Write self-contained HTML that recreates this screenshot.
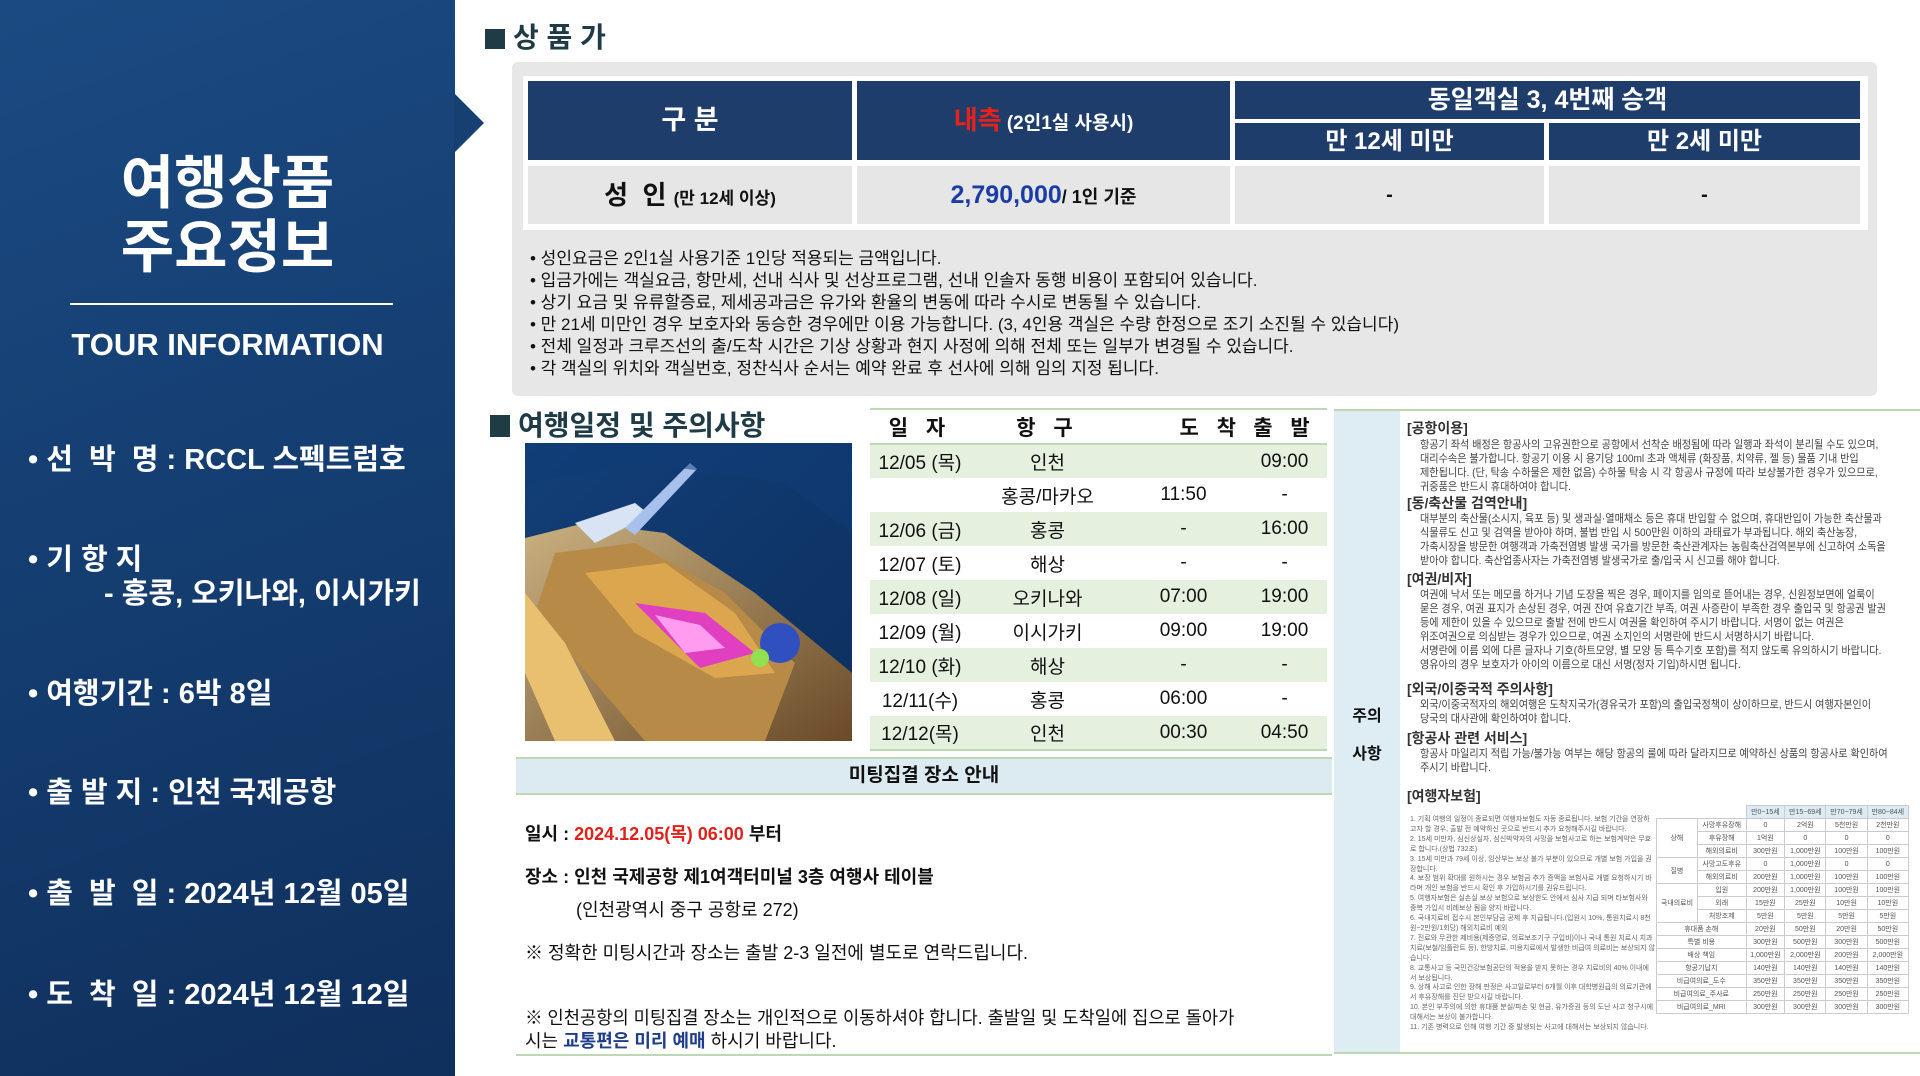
<!DOCTYPE html>
<html><head><meta charset="utf-8">
<style>
*{margin:0;padding:0;box-sizing:border-box}
body{width:1920px;height:1076px;overflow:hidden;background:#fff;position:relative;font-family:"Liberation Sans","Noto Sans CJK KR",sans-serif;color:#111}
.abs{position:absolute;white-space:nowrap}
.side{position:absolute;left:0;top:0;width:455px;height:1076px;background:linear-gradient(160deg,#1b4a82 0%,#143d70 50%,#0f2f5c 100%)}
.arrow{position:absolute;left:454px;top:93px;width:0;height:0;border-top:30px solid transparent;border-bottom:30px solid transparent;border-left:30px solid #163f72}
.title{color:#fff;font-weight:bold;font-size:58px;text-align:center;width:455px;left:0;line-height:64px}
.bul{color:#fff;font-weight:bold;font-size:29px;left:28px;letter-spacing:0px}
.sq{display:inline-block;width:20px;height:20px;background:#1f3c46;margin-right:8px;vertical-align:-2px}
.h2{font-size:28px;font-weight:bold;color:#1f3c46}
table{border-collapse:collapse}
.sc td{text-align:center;font-size:19px;height:34px}
.note{font-size:17px;left:530px;transform:scaleX(1.0);transform-origin:left}
.r{font-size:11px;color:#444;transform:scaleX(.92);transform-origin:left;position:absolute;white-space:nowrap;left:1420px}
.rh{font-size:14px;font-weight:bold;color:#333;position:absolute;left:1407px;white-space:nowrap}
.it td{border:1px solid #ccc;font-size:7px;color:#555;text-align:center;height:13px}
</style></head><body>
<div class="side"></div>
<div class="arrow"></div>
<div class="abs title" style="top:152px">여행상품<br>주요정보</div>
<div class="abs" style="left:70px;top:303px;width:323px;height:2px;background:#fff"></div>
<div class="abs" style="left:0;width:455px;text-align:center;top:327px;color:#fff;font-size:31px;font-weight:bold">TOUR INFORMATION</div>
<div class="abs bul" style="top:436px">• 선 &nbsp;박 &nbsp;명 : RCCL 스펙트럼호</div>
<div class="abs bul" style="top:536px">• 기 항 지</div>
<div class="abs bul" style="top:570px;left:104px">- 홍콩, 오키나와, 이시가키</div>
<div class="abs bul" style="top:670px">• 여행기간 : 6박 8일</div>
<div class="abs bul" style="top:769px">• 출 발 지 : 인천 국제공항</div>
<div class="abs bul" style="top:870px">• 출 &nbsp;발 &nbsp;일 : 2024년 12월 05일</div>
<div class="abs bul" style="top:971px">• 도 &nbsp;착 &nbsp;일 : 2024년 12월 12일</div>

<div class="abs h2" style="left:485px;top:16px"><span class="sq"></span>상 품 가</div>
<div class="abs" style="left:512px;top:62px;width:1365px;height:334px;background:#e7e7e7;border-radius:6px"></div>
<div class="abs" style="left:523px;top:76px;width:1345px;height:154px;background:#fff"></div>
<div class="abs" style="left:528px;top:81px;width:324px;height:79px;background:#1f3d6b;color:#fff;font-size:27px;font-weight:bold;text-align:center;line-height:79px">구 분</div>
<div class="abs" style="left:857px;top:81px;width:373px;height:79px;background:#1f3d6b;color:#fff;font-size:19px;font-weight:bold;text-align:center;line-height:79px"><span style="color:#e8221b;font-size:26px">내측</span> (2인1실 사용시)</div>
<div class="abs" style="left:1235px;top:81px;width:625px;height:38px;background:#1f3d6b;color:#fff;font-size:25px;font-weight:bold;text-align:center;line-height:38px">동일객실 3, 4번째 승객</div>
<div class="abs" style="left:1235px;top:123px;width:309px;height:37px;background:#1f3d6b;color:#fff;font-size:24px;font-weight:bold;text-align:center;line-height:37px">만 12세 미만</div>
<div class="abs" style="left:1549px;top:123px;width:311px;height:37px;background:#1f3d6b;color:#fff;font-size:24px;font-weight:bold;text-align:center;line-height:37px">만 2세 미만</div>
<div class="abs" style="left:528px;top:166px;width:324px;height:58px;background:#e6e6e6;font-size:26px;font-weight:bold;text-align:center;line-height:58px">성 &nbsp;인 <span style="font-size:17px">(만 12세 이상)</span></div>
<div class="abs" style="left:857px;top:166px;width:373px;height:58px;background:#e6e6e6;font-size:18px;font-weight:bold;text-align:center;line-height:58px"><span style="color:#1b3ca6;font-size:25px">2,790,000</span>/ 1인 기준</div>
<div class="abs" style="left:1235px;top:166px;width:309px;height:58px;background:#e6e6e6;font-size:20px;font-weight:bold;text-align:center;line-height:58px">-</div>
<div class="abs" style="left:1549px;top:166px;width:311px;height:58px;background:#e6e6e6;font-size:20px;font-weight:bold;text-align:center;line-height:58px">-</div>

<div class="abs note" style="top:244px">• 성인요금은 2인1실 사용기준 1인당 적용되는 금액입니다.</div>
<div class="abs note" style="top:266px">• 입금가에는 객실요금, 항만세, 선내 식사 및 선상프로그램, 선내 인솔자 동행 비용이 포함되어 있습니다.</div>
<div class="abs note" style="top:288px">• 상기 요금 및 유류할증료, 제세공과금은 유가와 환율의 변동에 따라 수시로 변동될 수 있습니다.</div>
<div class="abs note" style="top:310px">• 만 21세 미만인 경우 보호자와 동승한 경우에만 이용 가능합니다. (3, 4인용 객실은 수량 한정으로 조기 소진될 수 있습니다)</div>
<div class="abs note" style="top:332px">• 전체 일정과 크루즈선의 출/도착 시간은 기상 상황과 현지 사정에 의해 전체 또는 일부가 변경될 수 있습니다.</div>
<div class="abs note" style="top:354px">• 각 객실의 위치와 객실번호, 정찬식사 순서는 예약 완료 후 선사에 의해 임의 지정 됩니다.</div>

<div class="abs h2" style="left:490px;top:404px;font-size:28px"><span class="sq" style="width:20px;height:22px"></span>여행일정 및 주의사항</div>
<svg class="abs" style="left:525px;top:443px" width="327" height="298" viewBox="0 0 327 298">
<defs><linearGradient id="sea" x1="0" y1="0" x2="1" y2="1"><stop offset="0" stop-color="#123f78"/><stop offset="1" stop-color="#0d2f5e"/></linearGradient>
<linearGradient id="hull" x1="0" y1="0" x2="1" y2="1"><stop offset="0" stop-color="#c9b080"/><stop offset="1" stop-color="#6a4a28"/></linearGradient></defs>
<rect width="327" height="298" fill="url(#sea)"/>
<path d="M0 95 L60 80 L140 90 L230 150 L327 230 L327 298 L0 298 Z" fill="url(#hull)"/>
<path d="M30 110 L110 100 L200 150 L270 220 L240 298 L120 298 L10 170 Z" fill="#b88a48"/>
<path d="M60 130 L140 120 L210 170 L250 230 L190 235 L110 190 Z" fill="#e0a850" opacity=".9"/>
<path d="M110 160 L180 170 L230 210 L175 225 Z" fill="#e040c0"/>
<path d="M130 172 L175 182 L200 205 L160 210 Z" fill="#ff9cf0"/>
<path d="M0 150 L40 200 L90 298 L30 298 L0 230 Z" fill="#e8c070"/>
<path d="M50 80 L110 60 L125 72 L70 100 Z" fill="#d8e4f4"/>
<path d="M100 85 L165 20 L172 26 L110 92 Z" fill="#a8c0ec"/>
<circle cx="255" cy="200" r="20" fill="#3050c0"/>
<circle cx="235" cy="215" r="9" fill="#90e050"/>
<path d="M0 0 L327 0 L327 90 L260 40 L120 20 L0 40 Z" fill="#0f3b78" opacity=".5"/>
</svg>

<div class="abs" style="left:870px;top:408px;width:457px;height:2px;background:#bcd9b4"></div>
<table class="abs sc" style="left:870px;top:410px;width:457px">
<tr style="height:31px;border-bottom:2px solid #bcd9b4"><td style="width:100px;font-weight:bold;font-size:21px;height:31px;letter-spacing:6px">일 자</td><td style="width:155px;font-weight:bold;font-size:21px;letter-spacing:6px">항 구</td><td style="width:117px;font-weight:bold;font-size:21px;text-align:right;letter-spacing:6px">도 착</td><td style="font-weight:bold;font-size:21px;letter-spacing:6px">출 발</td></tr>
<tr style="background:#e6f0df"><td>12/05 (목)</td><td>인천</td><td></td><td>09:00</td></tr>
<tr><td></td><td>홍콩/마카오</td><td>11:50</td><td>-</td></tr>
<tr style="background:#e6f0df"><td>12/06 (금)</td><td>홍콩</td><td>-</td><td>16:00</td></tr>
<tr><td>12/07 (토)</td><td>해상</td><td>-</td><td>-</td></tr>
<tr style="background:#e6f0df"><td>12/08 (일)</td><td>오키나와</td><td>07:00</td><td>19:00</td></tr>
<tr><td>12/09 (월)</td><td>이시가키</td><td>09:00</td><td>19:00</td></tr>
<tr style="background:#e6f0df"><td>12/10 (화)</td><td>해상</td><td>-</td><td>-</td></tr>
<tr><td>12/11(수)</td><td>홍콩</td><td>06:00</td><td>-</td></tr>
<tr style="background:#e6f0df;border-bottom:2px solid #bcd9b4"><td>12/12(목)</td><td>인천</td><td>00:30</td><td>04:50</td></tr>
</table>

<div class="abs" style="left:516px;top:757px;width:816px;height:38px;background:#dcebf1;border-top:2px solid #bcd9b4;border-bottom:2px solid #bcd9b4;text-align:center;font-size:19px;font-weight:bold;line-height:34px">미팅집결 장소 안내</div>
<div class="abs" style="left:525px;top:820px;font-size:18px;font-weight:bold">일시 : <span style="color:#e0201a">2024.12.05(목) 06:00</span> 부터</div>
<div class="abs" style="left:525px;top:863px;font-size:18px;font-weight:bold">장소 : 인천 국제공항 제1여객터미널 3층 여행사 테이블</div>
<div class="abs" style="left:576px;top:896px;font-size:18px">(인천광역시 중구 공항로 272)</div>
<div class="abs" style="left:525px;top:939px;font-size:18px">※ 정확한 미팅시간과 장소는 출발 2-3 일전에 별도로 연락드립니다.</div>
<div class="abs" style="left:525px;top:1004px;font-size:18px;transform:scaleX(.98);transform-origin:left">※ 인천공항의 미팅집결 장소는 개인적으로 이동하셔야 합니다. 출발일 및 도착일에 집으로 돌아가</div>
<div class="abs" style="left:525px;top:1027px;font-size:18px">시는 <b style="color:#1f3d8a">교통편은 미리 예매</b> 하시기 바랍니다.</div>
<div class="abs" style="left:516px;top:1054px;width:816px;height:2px;background:#bcd9b4"></div>

<div class="abs" style="left:1334px;top:409px;width:586px;height:2px;background:#bcd9b4"></div>
<div class="abs" style="left:1334px;top:411px;width:66px;height:641px;background:#deedf4"></div>
<div class="abs" style="left:1334px;top:1052px;width:586px;height:2px;background:#bcd9b4"></div>
<div class="abs" style="left:1334px;top:698px;width:66px;text-align:center;font-size:16px;font-weight:bold;line-height:38px">주의<br>사항</div>

<div class="rh" style="top:418px">[공항이용]</div>
<div class="r" style="top:436px">항공기 좌석 배정은 항공사의 고유권한으로 공항에서 선착순 배정됨에 따라 일행과 좌석이 분리될 수도 있으며,</div>
<div class="r" style="top:450px">대리수속은 불가합니다. 항공기 이용 시 용기당 100ml 초과 액체류 (화장품, 치약류, 젤 등) 물품 기내 반입</div>
<div class="r" style="top:464px">제한됩니다. (단, 탁송 수하물은 제한 없음) 수하물 탁송 시 각 항공사 규정에 따라 보상불가한 경우가 있으므로,</div>
<div class="r" style="top:478px">귀중품은 반드시 휴대하여야 합니다.</div>
<div class="rh" style="top:493px">[동/축산물 검역안내]</div>
<div class="r" style="top:510px">대부분의 축산물(소시지, 육포 등) 및 생과실·열매채소 등은 휴대 반입할 수 없으며, 휴대반입이 가능한 축산물과</div>
<div class="r" style="top:524px">식물류도 신고 및 검역을 받아야 하며, 불법 반입 시 500만원 이하의 과태료가 부과됩니다. 해외 축산농장,</div>
<div class="r" style="top:538px">가축시장을 방문한 여행객과 가축전염병 발생 국가를 방문한 축산관계자는 농림축산검역본부에 신고하여 소독을</div>
<div class="r" style="top:552px">받아야 합니다. 축산업종사자는 가축전염병 발생국가로 출/입국 시 신고를 해야 합니다.</div>
<div class="rh" style="top:569px">[여권/비자]</div>
<div class="r" style="top:586px">여권에 낙서 또는 메모를 하거나 기념 도장을 찍은 경우, 페이지를 임의로 뜯어내는 경우, 신원정보면에 얼룩이</div>
<div class="r" style="top:600px">묻은 경우, 여권 표지가 손상된 경우, 여권 잔여 유효기간 부족, 여권 사증란이 부족한 경우 출입국 및 항공권 발권</div>
<div class="r" style="top:614px">등에 제한이 있을 수 있으므로 출발 전에 반드시 여권을 확인하여 주시기 바랍니다. 서명이 없는 여권은</div>
<div class="r" style="top:628px">위조여권으로 의심받는 경우가 있으므로, 여권 소지인의 서명란에 반드시 서명하시기 바랍니다.</div>
<div class="r" style="top:642px">서명란에 이름 외에 다른 글자나 기호(하트모양, 별 모양 등 특수기호 포함)를 적지 않도록 유의하시기 바랍니다.</div>
<div class="r" style="top:656px">영유아의 경우 보호자가 아이의 이름으로 대신 서명(정자 기입)하시면 됩니다.</div>
<div class="rh" style="top:679px">[외국/이중국적 주의사항]</div>
<div class="r" style="top:696px">외국/이중국적자의 해외여행은 도착지국가(경유국가 포함)의 출입국정책이 상이하므로, 반드시 여행자본인이</div>
<div class="r" style="top:710px">당국의 대사관에 확인하여야 합니다.</div>
<div class="rh" style="top:728px">[항공사 관련 서비스]</div>
<div class="r" style="top:745px">항공사 마일리지 적립 가능/불가능 여부는 해당 항공의 룰에 따라 달라지므로 예약하신 상품의 항공사로 확인하여</div>
<div class="r" style="top:759px">주시기 바랍니다.</div>
<div class="rh" style="top:786px">[여행자보험]</div>
<div class="abs" style="left:1410px;top:815px;width:245px;font-size:7px;line-height:9.9px;color:#666;white-space:normal">
1. 기획 여행의 일정이 종료되면 여행자보험도 자동 종료됩니다. 보험 기간을 연장하고자 할 경우, 출발 전 예약하신 곳으로 반드시 추가 요청해주시길 바랍니다.<br>2. 15세 미만자, 심신상실자, 심신박약자의 사망을 보험사고로 하는 보험계약은 무효로 합니다.(상법 732조)<br>3. 15세 미만과 79세 이상, 임산부는 보상 불가 부분이 있으므로 개별 보험 가입을 권장합니다.<br>4. 보장 범위 확대를 원하시는 경우 보험금 추가 증액을 보험사로 개별 요청하시기 바라며 개인 보험을 반드시 확인 후 가입하시기를 권유드립니다.<br>5. 여행자보험은 실손실 보상 보험으로 보상한도 안에서 심사 지급 되며 타보험사와 중복 가입시 비례보상 됨을 양지 바랍니다.<br>6. 국내치료비 접수시 본인부담금 공제 후 지급됩니다.(입원시 10%, 통원치료시 8천원~2만원/1회당) 해외치료비 예외<br>7. 진료와 무관한 제비용(제증명료, 의료보조기구 구입비)이나 국내 통원 치료시 치과치료(보철/임플란트 등), 한방치료, 미용치료에서 발생한 비급여 의료비는 보상되지 않습니다.<br>8. 교통사고 등 국민건강보험공단의 적용을 받지 못하는 경우 치료비의 40% 이내에서 보상됩니다.<br>9. 상해 사고로 인한 장해 판정은 사고일로부터 6개월 이후 대학병원급의 의료기관에서 후유장해를 진단 받으시길 바랍니다.<br>10. 본인 부주의에 의한 휴대품 분실/파손 및 현금, 유가증권 등의 도난 사고 청구시에 대해서는 보상이 불가합니다.<br>11. 기존 병력으로 인해 여행 기간 중 발생되는 사고에 대해서는 보상되지 않습니다.</div>
<table class="abs it" style="left:1656px;top:805px;width:253px">
<tr><td style="border:none"></td><td style="border:none"></td><td style="background:#dcebf4">만0~15세</td><td style="background:#dcebf4">만15~69세</td><td style="background:#dcebf4">만70~79세</td><td style="background:#dcebf4">만80~84세</td></tr>
<tr><td rowspan="3">상해</td><td>사망후유장해</td><td>0</td><td>2억원</td><td>5천만원</td><td>2천만원</td></tr>
<tr><td>후유장해</td><td>1억원</td><td>0</td><td>0</td><td>0</td></tr>
<tr><td>해외의료비</td><td>300만원</td><td>1,000만원</td><td>100만원</td><td>100만원</td></tr>
<tr><td rowspan="2">질병</td><td>사망고도후유</td><td>0</td><td>1,000만원</td><td>0</td><td>0</td></tr>
<tr><td>해외의료비</td><td>200만원</td><td>1,000만원</td><td>100만원</td><td>100만원</td></tr>
<tr><td rowspan="3">국내의료비</td><td>입원</td><td>200만원</td><td>1,000만원</td><td>100만원</td><td>100만원</td></tr>
<tr><td>외래</td><td>15만원</td><td>25만원</td><td>10만원</td><td>10만원</td></tr>
<tr><td>처방조제</td><td>5만원</td><td>5만원</td><td>5만원</td><td>5만원</td></tr>
<tr><td colspan="2">휴대품 손해</td><td>20만원</td><td>50만원</td><td>20만원</td><td>50만원</td></tr>
<tr><td colspan="2">특별 비용</td><td>300만원</td><td>500만원</td><td>300만원</td><td>500만원</td></tr>
<tr><td colspan="2">배상 책임</td><td>1,000만원</td><td>2,000만원</td><td>200만원</td><td>2,000만원</td></tr>
<tr><td colspan="2">항공기납치</td><td>140만원</td><td>140만원</td><td>140만원</td><td>140만원</td></tr>
<tr><td colspan="2">비급여의료_도수</td><td>350만원</td><td>350만원</td><td>350만원</td><td>350만원</td></tr>
<tr><td colspan="2">비급여의료_주사료</td><td>250만원</td><td>250만원</td><td>250만원</td><td>250만원</td></tr>
<tr><td colspan="2">비급여의료_MRI</td><td>300만원</td><td>300만원</td><td>300만원</td><td>300만원</td></tr>
</table>
</body></html>
